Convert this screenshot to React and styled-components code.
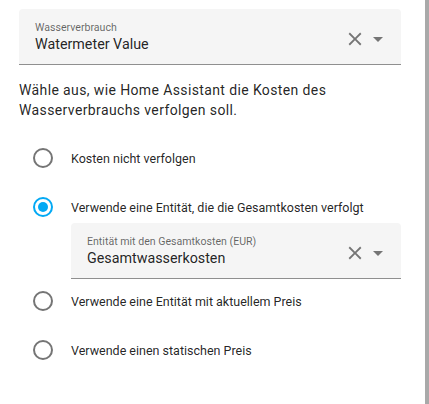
import React from "react";
import styled, { createGlobalStyle } from "styled-components";

const Global = createGlobalStyle`
  html, body { margin: 0; padding: 0; background: #fff; }
  body { font-family: Roboto, "Noto Sans", sans-serif; -webkit-font-smoothing: antialiased; }
`;

const Page = styled.div`
  display: flex;
  width: 429px;
  height: 404px;
  overflow: hidden;
`;

const Content = styled.div`
  flex: 1;
  padding: 9px 24px 0 19px;
  display: flex;
  flex-direction: column;
`;

const ScrollEdge = styled.div`
  width: 4px;
  background: #a9a9a9;
`;

const Field = styled.div`
  box-sizing: border-box;
  height: 56px;
  background: #f5f5f5;
  border-radius: 4px 4px 0 0;
  border-bottom: 1px solid #8f8f8f;
  display: flex;
  align-items: flex-start;
  padding: 12px 11px 0 16px;
  margin: ${(p) => p.$margin || "0"};
`;

const FieldText = styled.div`
  flex: 1;
  display: flex;
  flex-direction: column;
`;

const FieldLabel = styled.div`
  font-size: 10.6px;
  line-height: 14px;
  color: rgba(0, 0, 0, 0.6);
`;

const FieldValue = styled.div`
  font-size: 14.3px;
  line-height: 19px;
  color: rgba(0, 0, 0, 0.87);
`;

const Icons = styled.div`
  display: flex;
  align-items: center;
  color: #757575;
  margin-top: 6px;
`;

const Paragraph = styled.p`
  margin: 15px 0 0;
  font-size: 14px;
  line-height: 20px;
  letter-spacing: 0.38px;
  color: rgba(0, 0, 0, 0.87);
`;

const Options = styled.div`
  display: flex;
  flex-direction: column;
  margin-top: 14px;
`;

const Row = styled.label`
  display: flex;
  align-items: center;
  height: 48px;
  margin-top: ${(p) => p.$mt || 0}px;
  font-size: 12.5px;
  color: rgba(0, 0, 0, 0.87);
`;

const RowText = styled.span`
  padding-top: 1px;
`;

const RadioBox = styled.span`
  width: 48px;
  display: flex;
  align-items: center;
  justify-content: center;
  margin-right: 4px;
`;

const Circle = styled.span`
  box-sizing: border-box;
  width: 20px;
  height: 20px;
  border-radius: 50%;
  border: 2px solid ${(p) => (p.$checked ? "#03a9f4" : "#757575")};
  display: flex;
  align-items: center;
  justify-content: center;
  &::after {
    content: "";
    width: 10px;
    height: 10px;
    border-radius: 50%;
    background: #03a9f4;
    display: ${(p) => (p.$checked ? "block" : "none")};
  }
`;

const CloseIcon = () => (
  <svg width="22" height="22" viewBox="0 0 24 24">
    <path fill="currentColor" d="M19,6.41L17.59,5L12,10.59L6.41,5L5,6.41L10.59,12L5,17.59L6.41,19L12,13.41L17.59,19L19,17.59L13.41,12L19,6.41Z" />
  </svg>
);

const MenuDown = () => (
  <svg width="24" height="24" viewBox="0 0 24 24">
    <path fill="currentColor" d="M7,10L12,15L17,10H7Z" />
  </svg>
);

const Picker = ({ label, value, margin }) => (
  <Field $margin={margin}>
    <FieldText>
      <FieldLabel>{label}</FieldLabel>
      <FieldValue>{value}</FieldValue>
    </FieldText>
    <Icons>
      <CloseIcon />
      <MenuDown />
    </Icons>
  </Field>
);

const Radio = ({ checked, children, mt }) => (
  <Row $mt={mt}>
    <RadioBox>
      <Circle $checked={checked} />
    </RadioBox>
    <RowText>{children}</RowText>
  </Row>
);

export default function App() {
  return (
    <>
      <Global />
      <Page>
        <Content>
          <Picker label="Wasserverbrauch" value="Watermeter Value" />
          <Paragraph>
            Wähle aus, wie Home Assistant die Kosten des Wasserverbrauchs verfolgen soll.
          </Paragraph>
          <Options>
            <Radio>Kosten nicht verfolgen</Radio>
            <Radio checked mt={1}>Verwende eine Entität, die die Gesamtkosten verfolgt</Radio>
            <Picker
              label="Entität mit den Gesamtkosten (EUR)"
              value="Gesamtwasserkosten"
              margin="-8px 0 0 52px"
            />
            <Radio mt={-2}>Verwende eine Entität mit aktuellem Preis</Radio>
            <Radio mt={1}>Verwende einen statischen Preis</Radio>
          </Options>
        </Content>
        <ScrollEdge />
      </Page>
    </>
  );
}
